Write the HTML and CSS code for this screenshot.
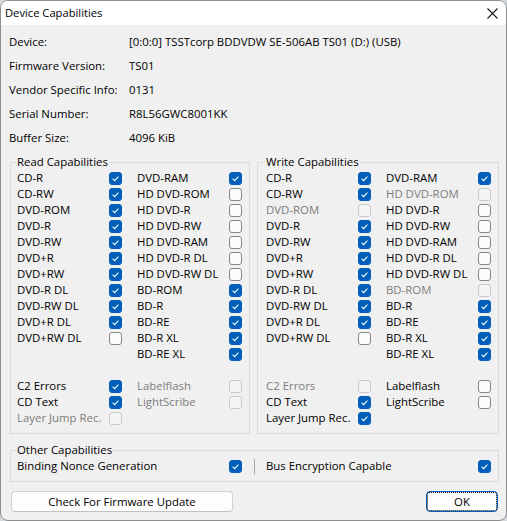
FILE: index.html
```html
<!DOCTYPE html>
<html>
<head>
<meta charset="utf-8">
<link rel="stylesheet" href="styles.css">
</head>
<body>
<div class="window">
  <div class="titlebar">
    <span class="title">Device Capabilities</span>
    <span class="close"><svg width="11" height="11" viewBox="0 0 11 11"><path d="M0.5 0.5L10.5 10.5M10.5 0.5L0.5 10.5" stroke="#1a1a1a" stroke-width="1.1" fill="none"/></svg></span>
  </div>
  <div class="content">
    <div class="info">
      <div class="info-row"><span class="k">Device:</span><span class="v">[0:0:0] TSSTcorp BDDVDW SE-506AB TS01 (D:) (USB)</span></div>
      <div class="info-row"><span class="k">Firmware Version:</span><span class="v">TS01</span></div>
      <div class="info-row"><span class="k">Vendor Specific Info:</span><span class="v">0131</span></div>
      <div class="info-row"><span class="k">Serial Number:</span><span class="v">R8L56GWC8001KK</span></div>
      <div class="info-row"><span class="k">Buffer Size:</span><span class="v">4096 KiB</span></div>
    </div>

    <div class="groups">
      <fieldset class="group read">
        <legend>Read Capabilities</legend>
        <div class="cols">
          <div class="col">
            <span class="lbl">CD-R</span><span class="cb on"><svg viewBox="0 0 11 11"><path d="M2.6 5.6L4.6 7.6L8.4 3.6"/></svg></span>
            <span class="lbl">CD-RW</span><span class="cb on"><svg viewBox="0 0 11 11"><path d="M2.6 5.6L4.6 7.6L8.4 3.6"/></svg></span>
            <span class="lbl">DVD-ROM</span><span class="cb on"><svg viewBox="0 0 11 11"><path d="M2.6 5.6L4.6 7.6L8.4 3.6"/></svg></span>
            <span class="lbl">DVD-R</span><span class="cb on"><svg viewBox="0 0 11 11"><path d="M2.6 5.6L4.6 7.6L8.4 3.6"/></svg></span>
            <span class="lbl">DVD-RW</span><span class="cb on"><svg viewBox="0 0 11 11"><path d="M2.6 5.6L4.6 7.6L8.4 3.6"/></svg></span>
            <span class="lbl">DVD+R</span><span class="cb on"><svg viewBox="0 0 11 11"><path d="M2.6 5.6L4.6 7.6L8.4 3.6"/></svg></span>
            <span class="lbl">DVD+RW</span><span class="cb on"><svg viewBox="0 0 11 11"><path d="M2.6 5.6L4.6 7.6L8.4 3.6"/></svg></span>
            <span class="lbl">DVD-R DL</span><span class="cb on"><svg viewBox="0 0 11 11"><path d="M2.6 5.6L4.6 7.6L8.4 3.6"/></svg></span>
            <span class="lbl">DVD-RW DL</span><span class="cb on"><svg viewBox="0 0 11 11"><path d="M2.6 5.6L4.6 7.6L8.4 3.6"/></svg></span>
            <span class="lbl">DVD+R DL</span><span class="cb on"><svg viewBox="0 0 11 11"><path d="M2.6 5.6L4.6 7.6L8.4 3.6"/></svg></span>
            <span class="lbl">DVD+RW DL</span><span class="cb"></span>
            <span class="empty"></span><span class="empty"></span>
            <span class="empty"></span><span class="empty"></span>
            <span class="lbl">C2 Errors</span><span class="cb on"><svg viewBox="0 0 11 11"><path d="M2.6 5.6L4.6 7.6L8.4 3.6"/></svg></span>
            <span class="lbl">CD Text</span><span class="cb on"><svg viewBox="0 0 11 11"><path d="M2.6 5.6L4.6 7.6L8.4 3.6"/></svg></span>
            <span class="lbl dis">Layer Jump Rec.</span><span class="cb dis"></span>
          </div>
          <div class="col">
            <span class="lbl">DVD-RAM</span><span class="cb on"><svg viewBox="0 0 11 11"><path d="M2.6 5.6L4.6 7.6L8.4 3.6"/></svg></span>
            <span class="lbl">HD DVD-ROM</span><span class="cb"></span>
            <span class="lbl">HD DVD-R</span><span class="cb"></span>
            <span class="lbl">HD DVD-RW</span><span class="cb"></span>
            <span class="lbl">HD DVD-RAM</span><span class="cb"></span>
            <span class="lbl">HD DVD-R DL</span><span class="cb"></span>
            <span class="lbl">HD DVD-RW DL</span><span class="cb"></span>
            <span class="lbl">BD-ROM</span><span class="cb on"><svg viewBox="0 0 11 11"><path d="M2.6 5.6L4.6 7.6L8.4 3.6"/></svg></span>
            <span class="lbl">BD-R</span><span class="cb on"><svg viewBox="0 0 11 11"><path d="M2.6 5.6L4.6 7.6L8.4 3.6"/></svg></span>
            <span class="lbl">BD-RE</span><span class="cb on"><svg viewBox="0 0 11 11"><path d="M2.6 5.6L4.6 7.6L8.4 3.6"/></svg></span>
            <span class="lbl">BD-R XL</span><span class="cb on"><svg viewBox="0 0 11 11"><path d="M2.6 5.6L4.6 7.6L8.4 3.6"/></svg></span>
            <span class="lbl">BD-RE XL</span><span class="cb on"><svg viewBox="0 0 11 11"><path d="M2.6 5.6L4.6 7.6L8.4 3.6"/></svg></span>
            <span class="empty"></span><span class="empty"></span>
            <span class="lbl dis">Labelflash</span><span class="cb dis"></span>
            <span class="lbl dis">LightScribe</span><span class="cb dis"></span>
            <span class="empty"></span><span class="empty"></span>
          </div>
        </div>
      </fieldset>

      <fieldset class="group write">
        <legend>Write Capabilities</legend>
        <div class="cols">
          <div class="col">
            <span class="lbl">CD-R</span><span class="cb on"><svg viewBox="0 0 11 11"><path d="M2.6 5.6L4.6 7.6L8.4 3.6"/></svg></span>
            <span class="lbl">CD-RW</span><span class="cb on"><svg viewBox="0 0 11 11"><path d="M2.6 5.6L4.6 7.6L8.4 3.6"/></svg></span>
            <span class="lbl dis">DVD-ROM</span><span class="cb dis"></span>
            <span class="lbl">DVD-R</span><span class="cb on"><svg viewBox="0 0 11 11"><path d="M2.6 5.6L4.6 7.6L8.4 3.6"/></svg></span>
            <span class="lbl">DVD-RW</span><span class="cb on"><svg viewBox="0 0 11 11"><path d="M2.6 5.6L4.6 7.6L8.4 3.6"/></svg></span>
            <span class="lbl">DVD+R</span><span class="cb on"><svg viewBox="0 0 11 11"><path d="M2.6 5.6L4.6 7.6L8.4 3.6"/></svg></span>
            <span class="lbl">DVD+RW</span><span class="cb on"><svg viewBox="0 0 11 11"><path d="M2.6 5.6L4.6 7.6L8.4 3.6"/></svg></span>
            <span class="lbl">DVD-R DL</span><span class="cb on"><svg viewBox="0 0 11 11"><path d="M2.6 5.6L4.6 7.6L8.4 3.6"/></svg></span>
            <span class="lbl">DVD-RW DL</span><span class="cb on"><svg viewBox="0 0 11 11"><path d="M2.6 5.6L4.6 7.6L8.4 3.6"/></svg></span>
            <span class="lbl">DVD+R DL</span><span class="cb on"><svg viewBox="0 0 11 11"><path d="M2.6 5.6L4.6 7.6L8.4 3.6"/></svg></span>
            <span class="lbl">DVD+RW DL</span><span class="cb"></span>
            <span class="empty"></span><span class="empty"></span>
            <span class="empty"></span><span class="empty"></span>
            <span class="lbl dis">C2 Errors</span><span class="cb dis"></span>
            <span class="lbl">CD Text</span><span class="cb on"><svg viewBox="0 0 11 11"><path d="M2.6 5.6L4.6 7.6L8.4 3.6"/></svg></span>
            <span class="lbl">Layer Jump Rec.</span><span class="cb on"><svg viewBox="0 0 11 11"><path d="M2.6 5.6L4.6 7.6L8.4 3.6"/></svg></span>
          </div>
          <div class="col">
            <span class="lbl">DVD-RAM</span><span class="cb on"><svg viewBox="0 0 11 11"><path d="M2.6 5.6L4.6 7.6L8.4 3.6"/></svg></span>
            <span class="lbl dis">HD DVD-ROM</span><span class="cb dis"></span>
            <span class="lbl">HD DVD-R</span><span class="cb"></span>
            <span class="lbl">HD DVD-RW</span><span class="cb"></span>
            <span class="lbl">HD DVD-RAM</span><span class="cb"></span>
            <span class="lbl">HD DVD-R DL</span><span class="cb"></span>
            <span class="lbl">HD DVD-RW DL</span><span class="cb"></span>
            <span class="lbl dis">BD-ROM</span><span class="cb dis"></span>
            <span class="lbl">BD-R</span><span class="cb on"><svg viewBox="0 0 11 11"><path d="M2.6 5.6L4.6 7.6L8.4 3.6"/></svg></span>
            <span class="lbl">BD-RE</span><span class="cb on"><svg viewBox="0 0 11 11"><path d="M2.6 5.6L4.6 7.6L8.4 3.6"/></svg></span>
            <span class="lbl">BD-R XL</span><span class="cb on"><svg viewBox="0 0 11 11"><path d="M2.6 5.6L4.6 7.6L8.4 3.6"/></svg></span>
            <span class="lbl">BD-RE XL</span><span class="cb on"><svg viewBox="0 0 11 11"><path d="M2.6 5.6L4.6 7.6L8.4 3.6"/></svg></span>
            <span class="empty"></span><span class="empty"></span>
            <span class="lbl">Labelflash</span><span class="cb"></span>
            <span class="lbl">LightScribe</span><span class="cb"></span>
            <span class="empty"></span><span class="empty"></span>
          </div>
        </div>
      </fieldset>
    </div>

    <fieldset class="group other">
      <legend>Other Capabilities</legend>
      <div class="other-row">
        <span class="lbl">Binding Nonce Generation</span><span class="cb on"><svg viewBox="0 0 11 11"><path d="M2.6 5.6L4.6 7.6L8.4 3.6"/></svg></span>
        <span class="sep"></span>
        <span class="lbl">Bus Encryption Capable</span><span class="cb on"><svg viewBox="0 0 11 11"><path d="M2.6 5.6L4.6 7.6L8.4 3.6"/></svg></span>
      </div>
    </fieldset>

    <div class="buttons">
      <div class="btn firmware">Check For Firmware Update</div>
      <div class="btn ok"><span class="focus">OK</span></div>
    </div>
  </div>
</div>
</body>
</html>
```

FILE: styles.css
```css
* {
  box-sizing: border-box;
}

html, body {
  margin: 0;
  padding: 0;
}

body {
  background: #d4d7dc;
  font-family: "Open Sans", "Liberation Sans", sans-serif;
  font-size: 11.4px;
  color: #000;
}

.window {
  width: 507px;
  height: 521px;
  background: #f0f0f0;
  border: 1px solid #8f8f8f;
  border-radius: 8px;
  overflow: hidden;
  display: flex;
  flex-direction: column;
}

.titlebar {
  height: 24px;
  flex: none;
  background: #fff;
  display: flex;
  align-items: center;
  justify-content: space-between;
  padding-left: 4px;
}

.title {
  font-size: 11.2px;
  line-height: 16px;
}

.close {
  width: 28px;
  height: 24px;
  display: flex;
  align-items: center;
  justify-content: center;
}

.content {
  flex: 1;
  display: flex;
  flex-direction: column;
  padding: 4px 7px 8px 9px;
}

.info-row {
  display: flex;
  align-items: center;
  height: 24px;
  margin-left: -1px;
  white-space: nowrap;
}

.k {
  width: 120px;
  flex: none;
}

.groups {
  display: grid;
  grid-template-columns: 240px 242px;
  column-gap: 7px;
  margin-top: 5px;
}

fieldset.group {
  margin: 0;
  min-width: 0;
  border: 1px solid #dadada;
  padding: 0 7px 7px 6px;
}

fieldset.write {
  padding-left: 8px;
}

legend {
  padding: 0 1px;
  margin-left: -1px;
  line-height: 16px;
}

.cols {
  display: flex;
  column-gap: 15px;
}

.col {
  display: grid;
  grid-template-columns: 92px 13px;
  grid-auto-rows: 16px;
  align-items: center;
}

.lbl {
  white-space: nowrap;
  line-height: 16px;
}

.lbl.dis {
  color: #7d7d7d;
}

.cb {
  width: 13px;
  height: 13px;
  border: 1px solid #878787;
  border-radius: 3px;
  background: #fbfbfb;
  display: flex;
  align-items: center;
  justify-content: center;
}

.cb.on {
  background: #005fb8;
  border-color: #005fb8;
}

.cb.dis {
  border-color: #cacaca;
  background: #f5f5f5;
}

.cb svg {
  width: 11px;
  height: 11px;
  fill: none;
  stroke: #fff;
  stroke-width: 1.1;
}

.group.other {
  margin-top: 8px;
}

.other-row {
  display: grid;
  grid-template-columns: 212px 13px 24px 212px 13px;
  grid-auto-rows: 16px;
  align-items: center;
}

.sep {
  width: 1px;
  height: 15px;
  background: #a8a8a8;
  justify-self: center;
}

.buttons {
  display: flex;
  justify-content: space-between;
  margin-top: 9px;
}

.btn {
  height: 21px;
  border: 1px solid #d0d0d0;
  border-bottom-color: #c2c2c2;
  border-radius: 4px;
  background: #fdfdfd;
  display: flex;
  align-items: center;
  justify-content: center;
  line-height: 16px;
}

.firmware {
  width: 222px;
  margin-left: 1px;
}

.ok {
  width: 72px;
  margin-right: 1px;
  border-color: #005fb8;
  padding: 0;
}

.focus {
  flex: 1;
  align-self: stretch;
  border: 1px dotted #000;
  border-radius: 2px;
  display: flex;
  align-items: center;
  justify-content: center;
}
```
